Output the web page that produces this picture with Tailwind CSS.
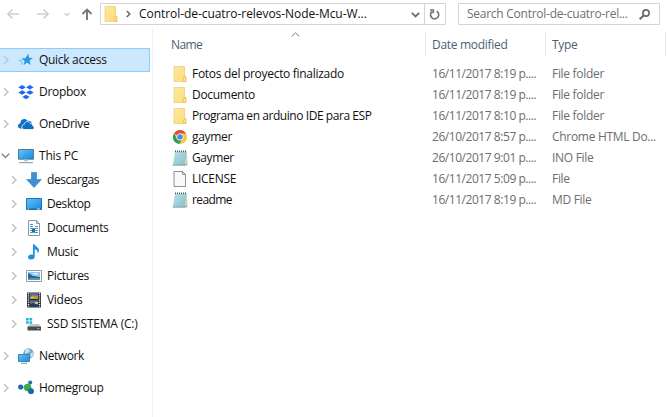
<!DOCTYPE html>
<html lang="en">
<head>
<meta charset="utf-8">
<title>File Explorer</title>
<script src="https://cdn.jsdelivr.net/npm/@tailwindcss/browser@4"></script>
</head>
<body class="w-[668px] h-[417px] overflow-hidden bg-white font-['Open_Sans','Noto_Sans',sans-serif] text-[12px] leading-4 tracking-[-0.3px] text-[#111] whitespace-nowrap">
<svg class="absolute w-0 h-0">
  <defs>
    <linearGradient id="blue" x1="0" y1="0" x2="1" y2="1"><stop offset="0" stop-color="#62c4fa"/><stop offset="1" stop-color="#1689dd"/></linearGradient>
    <linearGradient id="yellow" x1="0" y1="0" x2="1" y2="1"><stop offset="0" stop-color="#ffeaa0"/><stop offset="1" stop-color="#fbd978"/></linearGradient>
    <linearGradient id="pad" x1="0" y1="0" x2="1" y2="1"><stop offset="0" stop-color="#c5e6ec"/><stop offset="1" stop-color="#7bb9c8"/></linearGradient>
  </defs>
  <symbol id="chev" viewBox="0 0 6 10"><path d="M1 1l4 4-4 4" fill="none" stroke="#c4c4c4" stroke-width="1.500"/></symbol>
  <symbol id="folder" viewBox="0 0 16 16"><path d="M2 .5h10.500v10l1.500.5v4.500H2z" fill="url(#yellow)" stroke="#e9ca72" stroke-width=".7"/><path d="M12.300 10.500h1.500v5h-2.300v-3z" fill="#ffe48c" stroke="#ddb956" stroke-width=".6"/></symbol>
  <symbol id="note" viewBox="0 0 16 16"><path d="M3 1.500h12L12.800 15H.8z" fill="url(#pad)"/><path d="M15 2l.5 12.500-2.700 1L15 2z" fill="#d9c9a5"/><path d="M.6 15.200h12.600l2.200-1" fill="none" stroke="#83979b" stroke-width=".9"/><path d="M3 5h10.500M2.700 7.500h10.400M2.300 10h10.400M1.900 12.500h10.300" stroke="#9ccfd9" stroke-width=".6"/><path d="M3 1.300h12" stroke="#4d5b60" stroke-width="1.800" stroke-dasharray="1 1"/></symbol>
</svg>

<header class="flex h-[28px] pt-[3px] items-start">
  <div class="flex h-[22px] w-[100px] items-center pl-[7px]">
    <svg class="w-3 h-3" viewBox="0 0 12 12" fill="none" stroke="#d0d0d0" stroke-width="1.600"><path d="M12 6H1M5.500 1.500L1 6l4.500 4.500"/></svg>
    <svg class="w-3 h-3 ml-[18px]" viewBox="0 0 12 12" fill="none" stroke="#d0d0d0" stroke-width="1.600"><path d="M0 6h11M6.500 1.500L11 6l-4.500 4.500"/></svg>
    <svg class="w-[6px] h-[5px] ml-[15px]" viewBox="0 0 6 5" fill="none" stroke="#cfcfcf" stroke-width="1.300"><path d="M.5 1L3 3.500 5.500 1"/></svg>
    <svg class="w-3 h-3 ml-[11px]" viewBox="0 0 12 12" fill="none" stroke="#777" stroke-width="1.900"><path d="M6 12V1.500M1.500 6L6 1.500 10.500 6"/></svg>
  </div>
  <div class="flex h-[22px] w-[346px] items-center border border-[#d5d5d5]">
    <svg class="w-4 h-4 ml-[2px]"><use href="#folder"/></svg>
    <svg class="w-[5px] h-2 ml-[7px]" viewBox="0 0 5 8" fill="none" stroke="#666" stroke-width="1.500"><path d="M.8 1l3 3-3 3"/></svg>
    <span class="ml-2 w-[272px]"><span class="tracking-[-0.06px]">Control-de-cuatro-relevos-Node-Mcu-W...</span></span>
    <svg class="w-[9px] h-[6px] mt-px" viewBox="0 0 9 6" fill="none" stroke="#707070" stroke-width="1.900"><path d="M.8 .8l3.700 3.700L8.200 .8"/></svg>
    <div class="ml-1 flex h-full w-5 items-center justify-center border-l border-[#d5d5d5]">
      <svg class="w-[11px] h-[11px]" viewBox="0 0 11 11" fill="none" stroke="#777" stroke-width="1.700"><path d="M7.700 2.200a4.100 4.100 0 1 1-4.600.3M1 1h3.300v3.300"/></svg>
    </div>
  </div>
  <div class="ml-3 flex h-[22px] w-[202px] items-center border border-[#d5d5d5] pl-2 text-[#707070]">
    <span class="w-[172px] tracking-[-0.26px]">Search Control-de-cuatro-rel...</span>
    <svg class="w-[11px] h-[11px]" viewBox="0 0 11 11" fill="none" stroke="#6b6b6b"><circle cx="7" cy="4" r="3.100" stroke-width="1.700"/><path d="M4.800 6.200L.7 10.300" stroke-width="2"/></svg>
  </div>
</header>

<main class="flex h-[389px]">
  <nav class="w-[153px] border-r border-[#f3f3f3] pt-5">
    <div class="flex h-6 w-[150px] items-center border border-l-0 border-[#8fcdf8] bg-[#cce8ff] pl-[3px]">
      <svg class="w-[6px] h-[10px]"><use href="#chev"/></svg>
      <svg class="ml-[9px] w-4 h-4" viewBox="0 0 16 16"><path d="M10.100 1.800l1 4 3.800.3-3.300 2.500 1 4.300-3.500-2.300-3.500 2.600 1.100-4.200-3.400-2.400 4.200-.3z" fill="#2496e2"/><path d="M2.500 10.500l2-1.200M3 12.500l2-1.300M1 8.300h2.300" stroke="#64b4e8"/></svg>
      <span class="ml-[5px] tracking-[-0.3px]">Quick access</span>
    </div>
    <div class="mt-2 flex h-6 items-center pl-[3px]">
      <svg class="w-[6px] h-[10px]"><use href="#chev"/></svg>
      <svg class="ml-[9px] w-4 h-4" viewBox="0 0 16 16" fill="#1769f5"><path d="M4.200 1l3.600 2.300-3.600 2.300L.3 3.300zM11.800 1l3.900 2.300-3.900 2.300-3.600-2.300zM4.200 6.200l3.600 2.300-3.600 2.300L.3 8.500zM11.800 6.200l3.900 2.300-3.900 2.300-3.600-2.300zM8 10.700l3.700 2.200L8 15.200l-3.700-2.300z"/></svg>
      <span class="ml-[5px]">Dropbox</span>
    </div>
    <div class="mt-2 flex h-6 items-center pl-[3px]">
      <svg class="w-[6px] h-[10px]"><use href="#chev"/></svg>
      <svg class="ml-[9px] w-4 h-4" viewBox="0 0 16 16" fill="#0f6fc4"><path d="M4 12.500H2.500C.9 12.500 0 11.300 0 10c0-1.500 1-2.500 2.300-2.600C2.300 4.500 4.300 3 6.300 3c1.600 0 2.700.8 3.300 2 2-.7 4 .5 4.300 2.600L4 10z"/><path d="M6.500 13.500c-1.500 0-2.700-1-2.700-2.500s1-2.500 2.400-2.600c.2-1.700 1.600-2.800 3.200-2.800 1.500 0 2.500.8 3 2 1.600 0 2.500 1 2.400 2.400 1 .3 1.500 1 1.300 1.900-.1 1-.9 1.600-1.900 1.600z" stroke="#fff" stroke-width=".8"/></svg>
      <span class="ml-[5px]">OneDrive</span>
    </div>
    <div class="mt-2 flex h-6 items-center pl-[1px]">
      <svg class="w-[9px] h-[6px]" viewBox="0 0 9 6"><path d="M.8 .8l3.700 3.700L8.200 .8" fill="none" stroke="#848484" stroke-width="1.500"/></svg>
      <svg class="ml-2 w-4 h-4" viewBox="0 0 16 16"><path d="M.5 1.500h15v9.700H.5z" fill="url(#blue)" stroke="#527b94"/><path d="M6 11.500h4v1.700H6z" fill="#b6c5cd"/><path d="M1 14.700h14" stroke="#8796a0"/></svg>
      <span class="ml-[5px] tracking-[-0.2px]">This PC</span>
    </div>
    <div class="flex h-6 items-center pl-[11px]">
      <svg class="w-[6px] h-[10px]"><use href="#chev"/></svg>
      <svg class="ml-[9px] w-4 h-4" viewBox="0 0 16 16"><path d="M5.500 .5h5v7h4.800L8 15.500.7 7.500h4.800z" fill="#3d8fd6" stroke="#2f7dc4" stroke-width=".6"/></svg>
      <span class="ml-[5px] tracking-[-0.45px]">descargas</span>
    </div>
    <div class="flex h-6 items-center pl-[11px]">
      <svg class="w-[6px] h-[10px]"><use href="#chev"/></svg>
      <svg class="ml-[9px] w-4 h-4" viewBox="0 0 16 16"><path d="M.5 2.500h15v11H.5z" fill="url(#blue)" stroke="#1876ba"/><path d="M1 13h14" stroke="#1764a2"/><path d="M2 13h1M11 13h3" stroke="#d2efff"/></svg>
      <span class="ml-[5px] tracking-[-0.42px]">Desktop</span>
    </div>
    <div class="flex h-6 items-center pl-[11px]">
      <svg class="w-[6px] h-[10px]"><use href="#chev"/></svg>
      <svg class="ml-[9px] w-4 h-4" viewBox="0 0 16 16"><path d="M2.500 .5h8l3 3v12h-11z" fill="#fff" stroke="#8c989f"/><path d="M10.500 .5v3h3" fill="none" stroke="#8c989f"/><path d="M4 4.500h3M4 6.500h3M9 6.500h3M4 8.500h8M4 10.500h2M9 10.500h3M4 12.500h8" stroke="#4797cc"/><path d="M6 9h3v3H6z" fill="#246e9e"/></svg>
      <span class="ml-[5px]">Documents</span>
    </div>
    <div class="flex h-6 items-center pl-[11px]">
      <svg class="w-[6px] h-[10px]"><use href="#chev"/></svg>
      <svg class="ml-[9px] w-4 h-4" viewBox="0 0 16 16"><path d="M7 .3h1.500c.3 2 4.500 3 4.500 6 0 1.200-.5 2.300-1.200 3.200.4-2.500-1-3.400-3.100-4.200v7.200c0 1.800-1.500 3-3.300 3C3.500 15.500 2 14.600 2 13.200c0-1.600 1.700-2.700 3.500-2.700.6 0 1.100.1 1.500.3z" fill="#1c91df"/></svg>
      <span class="ml-[5px]">Music</span>
    </div>
    <div class="flex h-6 items-center pl-[11px]">
      <svg class="w-[6px] h-[10px]"><use href="#chev"/></svg>
      <svg class="ml-[9px] w-4 h-4" viewBox="0 0 16 16"><path d="M.5 2.500h15v11H.5z" fill="#fff" stroke="#929ba1"/><path d="M2 4h12v8H2z" fill="#8bc9ed"/><path d="M2 5.500c3-.5 3 2.500 6 2.500 2 0 3 1 6 1v3H2z" fill="#2f6485"/><path d="M2 10.500c4-1 7 0 12-.5v2H2z" fill="#4f9bc4"/><path d="M6 5h6v1.500H8z" fill="#d9effb"/></svg>
      <span class="ml-[5px] tracking-[-0.4px]">Pictures</span>
    </div>
    <div class="flex h-6 items-center pl-[11px]">
      <svg class="w-[6px] h-[10px]"><use href="#chev"/></svg>
      <svg class="ml-[9px] w-4 h-4" viewBox="0 0 16 16"><path d="M1 .5h14v15H1z" fill="#2a2d35"/><path d="M4 1h8v6H4z" fill="#536a9b"/><path d="M4 8.500h8V15H4z" fill="#4d79b1"/><path d="M4 5l3-2 3 1 2-1v4H4z" fill="#b99731"/><path d="M5 5h3v1H5zM9 10h3v2H9z" fill="#e3c855"/><path d="M4 12l3-1 5 2v2H4z" fill="#273b55"/><path d="M2.500 1v14M13.500 1v14" stroke="#eee" stroke-width="1.400" stroke-dasharray="1.200 1"/></svg>
      <span class="ml-[5px]">Videos</span>
    </div>
    <div class="flex h-6 items-center pl-[11px]">
      <svg class="w-[6px] h-[10px]"><use href="#chev"/></svg>
      <svg class="ml-[9px] w-4 h-4" viewBox="0 0 16 16"><path d="M0 2h2.700v2.500H0zM3.500 2h2.700v2.500H3.500zM0 5.300h2.700v2.500H0zM3.500 5.300h2.700v2.500H3.500z" fill="#21b7d4"/><path d="M3.500 8h9.300l2.200 3H1.500z" fill="#c3c6c9"/><path d="M1.500 10.500H15v4H1.500z" fill="#484c50"/><path d="M11.500 12h1.800v1h-1.800z" fill="#7fe08b"/></svg>
      <span class="ml-[5px] tracking-[-0.22px]">SSD SISTEMA (C:)</span>
    </div>
    <div class="mt-2 flex h-6 items-center pl-[3px]">
      <svg class="w-[6px] h-[10px]"><use href="#chev"/></svg>
      <svg class="ml-[9px] w-4 h-4" viewBox="0 0 16 16"><circle cx="10.500" cy="5.500" r="5.200" fill="#73a9c9"/><path d="M7 2c2-2 5-1 5 1l-2 2-3 .5zM12 6l3-2v3l-2 3z" fill="#c4e2ed"/><path d="M.5 6.500h11v7H.5z" fill="url(#blue)" stroke="#3d81ae"/><path d="M3 15.300h6" stroke="#8297a4"/></svg>
      <span class="ml-[5px] tracking-[-0.4px]">Network</span>
    </div>
    <div class="mt-2 flex h-6 items-center pl-[3px]">
      <svg class="w-[6px] h-[10px]"><use href="#chev"/></svg>
      <svg class="ml-[9px] w-4 h-4" viewBox="0 0 16 16"><path d="M3 7.500h7l2-5M10 8l3 4" fill="none" stroke="#9cc9d2"/><circle cx="2.700" cy="7" r="2.600" fill="#2366ab"/><circle cx="12.200" cy="2.600" r="2.100" fill="#2578a9"/><circle cx="9.600" cy="7.500" r="3.700" fill="#35ad4c"/><circle cx="13" cy="11.200" r="2.900" fill="#1b65a7"/></svg>
      <span class="ml-[5px]">Homegroup</span>
    </div>
  </nav>

  <section class="relative w-[515px]">
    <svg class="absolute left-[138px] top-[4px] w-[9px] h-[5px]" viewBox="0 0 9 5"><path d="M.7 4.500l3.800-3.700 3.800 3.700" fill="none" stroke="#777"/></svg>
    <div class="mt-1 mb-[7px] grid h-6 grid-cols-[273px_120px_120px] items-center text-[#4c607a]">
      <div class="flex h-full items-center border-r border-[#e5e5e5] pl-[18px] pt-[2px] tracking-[-0.6px]">Name</div>
      <div class="flex h-full items-center border-r border-[#e5e5e5] pl-[6px] pt-[2px]"><span class="tracking-[-0.3px]">Date modified</span></div>
      <div class="flex h-full items-center border-r border-[#e5e5e5] pl-[6px] pt-[2px]">Type</div>
    </div>
    <div class="grid auto-rows-[21px] grid-cols-[273px_120px_120px] items-center text-[#6d6d6d]">
      <div class="flex items-center pl-[19px] text-[#111]"><svg class="mr-1 w-4 h-4"><use href="#folder"/></svg>Fotos del proyecto finalizado</div><div class="pl-[6px] tracking-[-0.45px]">16/11/2017 8:19 p....</div><div class="pl-[6px]">File folder</div>
      <div class="flex items-center pl-[19px] text-[#111]"><svg class="mr-1 w-4 h-4"><use href="#folder"/></svg>Documento</div><div class="pl-[6px] tracking-[-0.45px]">16/11/2017 8:19 p....</div><div class="pl-[6px]">File folder</div>
      <div class="flex items-center pl-[19px] text-[#111] tracking-[-0.44px]"><svg class="mr-1 w-4 h-4"><use href="#folder"/></svg>Programa en arduino IDE para ESP</div><div class="pl-[6px] tracking-[-0.45px]">16/11/2017 8:10 p....</div><div class="pl-[6px]">File folder</div>
      <div class="flex items-center pl-[19px] text-[#111]"><svg class="mr-1 w-4 h-4" viewBox="0 0 16 16"><circle cx="8" cy="8" r="7" fill="#f4c73c"/><path d="M8 8L2 4.400A7 7 0 0 1 14.100 4.600H8z" fill="#df4b3c"/><path d="M2 4.400A7 7 0 0 0 7.200 15l3.300-5.500L8 11 4.900 9.400z" fill="#2c9e5b"/><circle cx="8" cy="8" r="3.500" fill="#fff"/><circle cx="8" cy="8" r="2.800" fill="#4c87e8"/></svg>gaymer</div><div class="pl-[6px] tracking-[-0.45px]">26/10/2017 8:57 p....</div><div class="pl-[6px]">Chrome HTML Do...</div>
      <div class="flex items-center pl-[19px] text-[#111] tracking-[-0.4px]"><svg class="mr-1 w-4 h-4"><use href="#note"/></svg>Gaymer</div><div class="pl-[6px] tracking-[-0.45px]">26/10/2017 9:01 p....</div><div class="pl-[6px]">INO File</div>
      <div class="flex items-center pl-[19px] text-[#111]"><svg class="mr-1 w-4 h-4" viewBox="0 0 16 16"><path d="M2 .5h8.500l3 3v12H2z" fill="#f8f9fa" stroke="#858585" stroke-width=".9"/><path d="M10.500 .5v3h3" fill="none" stroke="#858585" stroke-width=".9"/></svg>LICENSE</div><div class="pl-[6px] tracking-[-0.45px]">16/11/2017 5:09 p....</div><div class="pl-[6px]">File</div>
      <div class="flex items-center pl-[19px] text-[#111] tracking-[-0.6px]"><svg class="mr-1 w-4 h-4"><use href="#note"/></svg>readme</div><div class="pl-[6px] tracking-[-0.45px]">16/11/2017 8:19 p....</div><div class="pl-[6px]">MD File</div>
    </div>
  </section>
</main>
</body>
</html>
